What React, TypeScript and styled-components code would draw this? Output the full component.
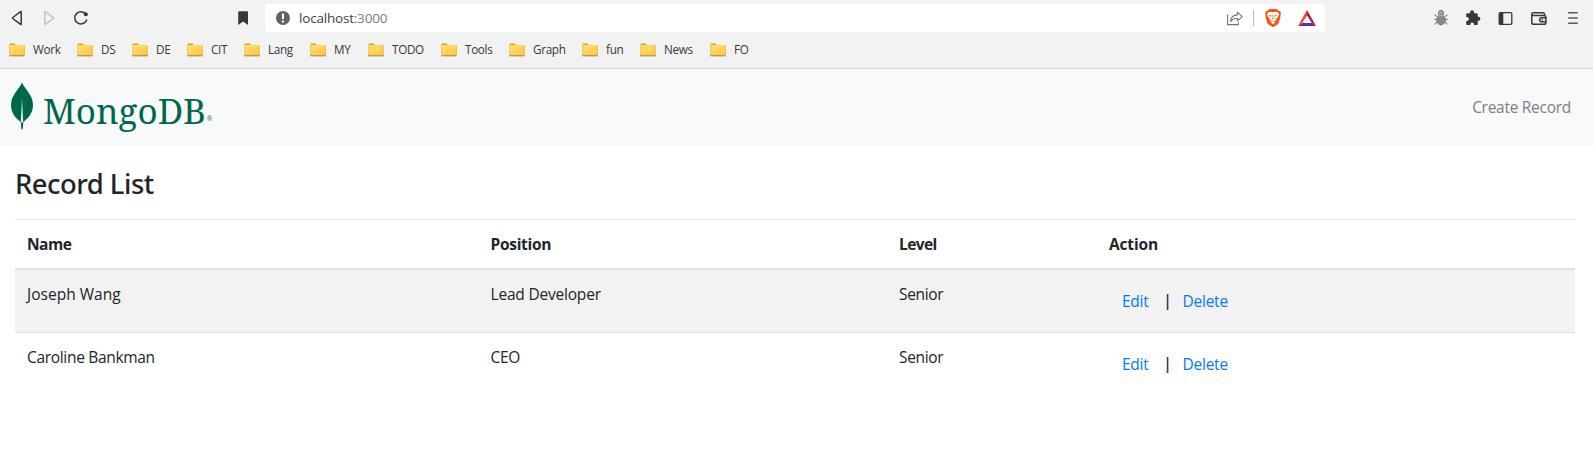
import React from 'react';
import styled, { createGlobalStyle } from 'styled-components';

const GlobalStyle = createGlobalStyle`
  *, *::before, *::after { box-sizing: border-box; }
  body {
    margin: 0;
    background: #fff;
    color: #212529;
    font: 400 15.5px/24px 'Open Sans', 'Noto Sans', sans-serif;
  }
`;

const Page = styled.div`
  height: 461px;
  overflow: hidden;
`;

/* Browser chrome */
const Chrome = styled.header`
  height: 69px;
  background: #f2f2f2;
  border-bottom: 1px solid #d2d6db;
`;

const Toolbar = styled.div`
  display: flex;
  align-items: center;
  height: 36px;
  padding: 0 10px 0 7px;
`;

const IconGroup = styled.div<{ $gap: number }>`
  display: flex;
  align-items: center;
  gap: ${(p) => p.$gap}px;
`;

const Icon = styled.svg.attrs({ viewBox: '0 0 20 20' })`
  display: block;
  flex: none;
  width: 20px;
  height: 20px;
  overflow: visible;
`;

const BookmarkSlot = styled.div`
  margin-left: 142px;
`;

const AddressBar = styled.div`
  display: flex;
  align-items: center;
  width: 1060px;
  height: 28px;
  margin: 0 106px 0 12px;
  padding: 0 8px 0 8px;
  background: #fff;
  border-radius: 4px;
`;

const Address = styled.div`
  flex: 1;
  margin-left: 6px;
  font-size: 13.5px;
  letter-spacing: -0.2px;
  line-height: 20px;
  color: #3c4043;
`;

const Port = styled.span`
  color: #777b80;
`;

const Divider = styled.span`
  width: 1px;
  height: 16px;
  margin: 0 9px 0 8px;
  background: #b9bbbe;
`;

const Bookmarks = styled.nav`
  display: flex;
  align-items: center;
  height: 28px;
  padding-left: 9px;
`;

const Bookmark = styled.div<{ $width: number }>`
  display: flex;
  flex: none;
  align-items: center;
  gap: 8px;
  width: ${(p) => p.$width}px;
  font-size: 11.7px;
  letter-spacing: -0.3px;
  line-height: 16px;
  color: #35383b;
`;

const BookmarkLabel = styled.span`
  padding-bottom: 2px;
`;

const Folder = styled.svg`
  display: block;
  flex: none;
  width: 16px;
  height: 14px;
`;

/* Application */
const Navbar = styled.nav`
  display: flex;
  align-items: center;
  justify-content: space-between;
  height: 77px;
  padding: 0 22px 0 11px;
  background: #f8f9fb;
`;

const Brand = styled.a`
  display: flex;
  align-items: center;
  color: #00684a;
`;

const Leaf = styled.svg`
  display: block;
  width: 22px;
  height: 48px;
  margin: 0 10px 4px 0;
`;

const Wordmark = styled.span`
  padding-top: 6px;
  font: 400 35px/48px 'Noto Serif', 'DejaVu Serif', serif;
`;

const Registered = styled.sup`
  align-self: flex-end;
  margin: 0 0 9px 1px;
  font: 400 7px/14px 'Liberation Sans', sans-serif;
`;

const Text = styled.span<{ $tracking?: number }>`
  letter-spacing: ${(p) => p.$tracking ?? 0}px;
`;

const NavLink = styled.a`
  padding-bottom: 1px;
  color: #7f8081;
  letter-spacing: -0.28px;
`;

const Content = styled.main`
  padding: 22px 18px 0 15px;
`;

const Title = styled.h3`
  margin: 0;
  height: 51px;
  font: 500 27.4px/32px 'Noto Sans', 'Open Sans', sans-serif;
  letter-spacing: -0.5px;
`;

const Table = styled.div`
  border-top: 1px solid #dee2e6;
`;

const columns = `463.5px 408.5px 210px 1fr`;

const HeadRow = styled.div`
  display: grid;
  grid-template-columns: ${columns};
  height: 50px;
  padding: 12px 12px 0;
  border-bottom: 2px solid #dee2e6;
  font-weight: 700;
`;

const Row = styled.div<{ $striped?: boolean }>`
  display: grid;
  grid-template-columns: ${columns};
  height: ${(p) => (p.$striped ? 62 : 63)}px;
  padding: 12px 12px 0;
  background: ${(p) => (p.$striped ? '#f2f2f2' : '#fff')};
  border-top: ${(p) => (p.$striped ? 'none' : '1px solid #dee2e6')};
`;

const Actions = styled.div`
  display: flex;
  align-items: flex-start;
  padding: 7px 0 0 13px;
`;

const ActionLink = styled.a`
  color: #007bff;
  letter-spacing: -0.25px;
`;

const Bar = styled.span`
  width: 34px;
  padding-left: 4px;
  margin-top: -1px;
  text-align: center;
  font-weight: 600;
  color: #1b2263;
`;

const bookmarks: [string, number][] = [
  ['Work', 68], ['DS', 55], ['DE', 55], ['CIT', 57], ['Lang', 66], ['MY', 58],
  ['TODO', 73], ['Tools', 68], ['Graph', 73], ['fun', 58], ['News', 70], ['FO', 60],
];

type Cell = { text: string; tracking: number };
const headings: Cell[] = [
  { text: 'Name', tracking: -0.5 },
  { text: 'Position', tracking: -0.3 },
  { text: 'Level', tracking: -0.6 },
  { text: 'Action', tracking: -0.15 },
];
const records: Cell[][] = [
  [
    { text: 'Joseph Wang', tracking: 0.02 },
    { text: 'Lead Developer', tracking: -0.2 },
    { text: 'Senior', tracking: -0.35 },
  ],
  [
    { text: 'Caroline Bankman', tracking: -0.32 },
    { text: 'CEO', tracking: -0.3 },
    { text: 'Senior', tracking: -0.35 },
  ],
];

function FolderIcon() {
  return (
    <Folder viewBox="0 0 16 14">
      <defs>
        <linearGradient id="folder" x1="0" y1="0" x2="1" y2="1">
          <stop offset="0" stopColor="#ffe07a" />
          <stop offset="1" stopColor="#fcc63c" />
        </linearGradient>
      </defs>
      <path d="M0.5 2Q0.5 0.5 1.5 0.5H5.5L7 2H14.5Q15.5 2 15.5 3V6H0.5z" fill="#dd9f15" />
      <rect x="0.2" y="12" width="15.6" height="1.6" rx="0.8" fill="#b9a988" />
      <rect x="0.4" y="2.5" width="15.2" height="10.3" rx="0.9" fill="#c8922a" />
      <rect x="0.4" y="2" width="15.2" height="10.1" rx="0.9" fill="url(#folder)" />
    </Folder>
  );
}

function BraveIcon() {
  return (
    <Icon>
      <path d="M6.2 1H13.8L15.4 2.8L17 3.1L18 5.4L17.4 7L17.5 9L15.8 14.8Q15.4 15.9 14.4 16.6L10 19.3L5.6 16.6Q4.6 15.9 4.2 14.8L2.5 9L2.6 7L2 5.4L3 3.1L4.6 2.8z" fill="#fb5410" />
      <path d="M7.5 3.8L10 4.3L12.5 3.8L14.8 4.2L16 6.3L15.2 8.6L13.2 10.8L13.4 12.2L11.2 12.9L10 12.4L8.8 12.9L6.6 12.2L6.8 10.8L4.8 8.6L4 6.3L5.2 4.2z" fill="#fff" />
      <path d="M6 6.9L8.7 7.5L8.1 8.4L6.8 8.2zM14 6.9L11.3 7.5L11.9 8.4L13.2 8.2zM9.6 6.4H10.4L10.3 9.7L11 10.5L10 11.2L9 10.5L9.7 9.7z" fill="#fb5410" />
      <path d="M10 13.1L12.5 14.3L10 16.3L7.5 14.3z" fill="#fff" />
    </Icon>
  );
}

function TriangleIcon() {
  return (
    <Icon>
      <path d="M10 2L10 7.5L5.2 15L1 18z" fill="#ff4724" />
      <path d="M10 2L19 18L14.8 15L10 7.5z" fill="#9e1f63" />
      <path d="M1 18L5.2 15H14.8L19 18z" fill="#662d91" />
    </Icon>
  );
}

function BugIcon() {
  return (
    <Icon fill="none" stroke="#8b8b8b">
      <path d="M6 8.5L3.5 6.8M6 11.5H3M6 14L3.6 16.3M14 8.5L16.5 6.8M14 11.5H17M14 14L16.4 16.3" strokeWidth="1.1" />
      <circle cx="10" cy="5" r="2.6" fill="#a5a5a5" stroke="#7b7b7b" />
      <ellipse cx="10" cy="11.8" rx="4.2" ry="5" fill="#888" stroke="#6e6e6e" />
      <path d="M7 8.2Q10 6.6 13 8.2" stroke="#bbb" />
    </Icon>
  );
}

export default function App() {
  return (
    <Page>
      <GlobalStyle />
      <Chrome>
        <Toolbar>
          <IconGroup $gap={12}>
            <Icon fill="none" stroke="#34383c" strokeWidth="1.5" strokeLinejoin="round">
              <path d="M14.2 3.9V16.1Q14.2 16.8 13.6 16.3L5.8 10.5Q5.2 10 5.8 9.5L13.6 3.7Q14.2 3.2 14.2 3.9z" />
            </Icon>
            <Icon fill="none" stroke="#c2c4c6" strokeWidth="1.5" strokeLinejoin="round">
              <path d="M5.8 3.9V16.1Q5.8 16.8 6.4 16.3L14.2 10.5Q14.8 10 14.2 9.5L6.4 3.7Q5.8 3.2 5.8 3.9z" />
            </Icon>
            <Icon>
              <path d="M14.3 5.6A6.1 6.1 0 1 0 15.6 12" fill="none" stroke="#34383c" strokeWidth="1.6" strokeLinecap="round" />
              <circle cx="14.8" cy="6.2" r="2" fill="#34383c" />
            </Icon>
          </IconGroup>
          <BookmarkSlot>
            <Icon fill="#34383c">
              <path d="M5.2 4.2Q5.2 3.2 6.2 3.2H14Q15 3.2 15 4.2V16.9L10.1 13.6L5.2 16.9z" />
            </Icon>
          </BookmarkSlot>
          <AddressBar>
            <Icon>
              <circle cx="10" cy="10" r="7" fill="#5f6368" />
              <path d="M10 5.4V11" stroke="#fff" strokeWidth="2" />
              <path d="M10 12.6V14.6" stroke="#fff" strokeWidth="2" />
            </Icon>
            <Address>
              localhost<Port>:3000</Port>
            </Address>
            <Icon fill="none" stroke="#737679" strokeWidth="1.1">
              <path d="M2.6 6.2V16.6H13.4V14.3" />
              <path d="M5.6 13.3Q6.2 7 12.3 6.9V4.2L17.3 8.7L12.3 13V10.3Q8 10.2 5.6 13.3z" strokeLinejoin="round" />
            </Icon>
            <Divider />
            <IconGroup $gap={14}>
              <BraveIcon />
              <TriangleIcon />
            </IconGroup>
          </AddressBar>
          <IconGroup $gap={13}>
            <BugIcon />
            <Icon fill="#34383c">
              <path d="M3.3 5.2H6.1V4.3A2 2 0 0 1 10.1 4.3V5.2H12.6Q13.7 5.2 13.7 6.3V8.8H14.4A2 2 0 0 1 14.4 12.8H13.7V15.9Q13.7 17 12.6 17H10V16.3A1.8 1.8 0 0 0 6.4 16.3V17H3.3Q2.2 17 2.2 15.9V12.9H2.9A1.9 1.9 0 0 0 2.9 9.1H2.2V6.3Q2.2 5.2 3.3 5.2z" />
            </Icon>
            <Icon>
              <rect x="2.2" y="4.7" width="12.6" height="11.6" rx="1.2" fill="none" stroke="#34383c" strokeWidth="1.3" />
              <path d="M2 4.6H6.3V16.4H2z" fill="#34383c" />
            </Icon>
            <Icon fill="none" stroke="#34383c" strokeWidth="1.5">
              <path d="M1.8 6.2V14.4Q1.8 16.3 3.7 16.3H14Q15.9 16.3 15.9 14.4V9.3Q15.9 7.5 14 7.5H3.4Q1.8 7.5 1.8 6.1Q1.8 4.7 3.4 4.7H12.8Q14.6 4.7 14.6 6.5V7.4" />
              <path d="M16 9.8H11.6A2 2 0 0 0 11.6 13.8H16M11.6 11.8H12.8" />
            </Icon>
            <Icon stroke="#55585c" strokeWidth="1.6" strokeLinecap="round">
              <path d="M5.8 4.8H14.2M5.8 10H14.2M5.8 15.2H14.2" />
            </Icon>
          </IconGroup>
        </Toolbar>
        <Bookmarks>
          {bookmarks.map(([label, width]) => (
            <Bookmark key={label} $width={width}>
              <FolderIcon />
              <BookmarkLabel>{label}</BookmarkLabel>
            </Bookmark>
          ))}
        </Bookmarks>
      </Chrome>

      <Navbar>
        <Brand>
          <Leaf viewBox="0 0 22 48">
            <path d="M11 0.3C12 3.6 14 5.5 16.5 9C20 13.5 22 18 22 23C22 31 17.5 36 12.3 40.2L11.8 47.2H10.4L9.8 40.2C4.5 36 0 31 0 23C0 18 2 13.5 5.5 9C8 5.5 10 3.6 11 0.3z" fill="#00684a" />
            <path d="M11 16L12.2 39.6L11 41.2L9.8 39.6z" fill="#dceae6" />
          </Leaf>
          <Wordmark>MongoDB</Wordmark>
          <Registered>®</Registered>
        </Brand>
        <NavLink>Create Record</NavLink>
      </Navbar>

      <Content>
        <Title>Record List</Title>
        <Table>
          <HeadRow>
            {headings.map((cell) => (
              <Text key={cell.text} $tracking={cell.tracking}>{cell.text}</Text>
            ))}
          </HeadRow>
          {records.map((cells, index) => (
            <Row key={cells[0].text} $striped={index % 2 === 0}>
              {cells.map((cell) => (
                <Text key={cell.text} $tracking={cell.tracking}>{cell.text}</Text>
              ))}
              <Actions>
                <ActionLink>Edit</ActionLink>
                <Bar>|</Bar>
                <ActionLink>Delete</ActionLink>
              </Actions>
            </Row>
          ))}
        </Table>
      </Content>
    </Page>
  );
}
